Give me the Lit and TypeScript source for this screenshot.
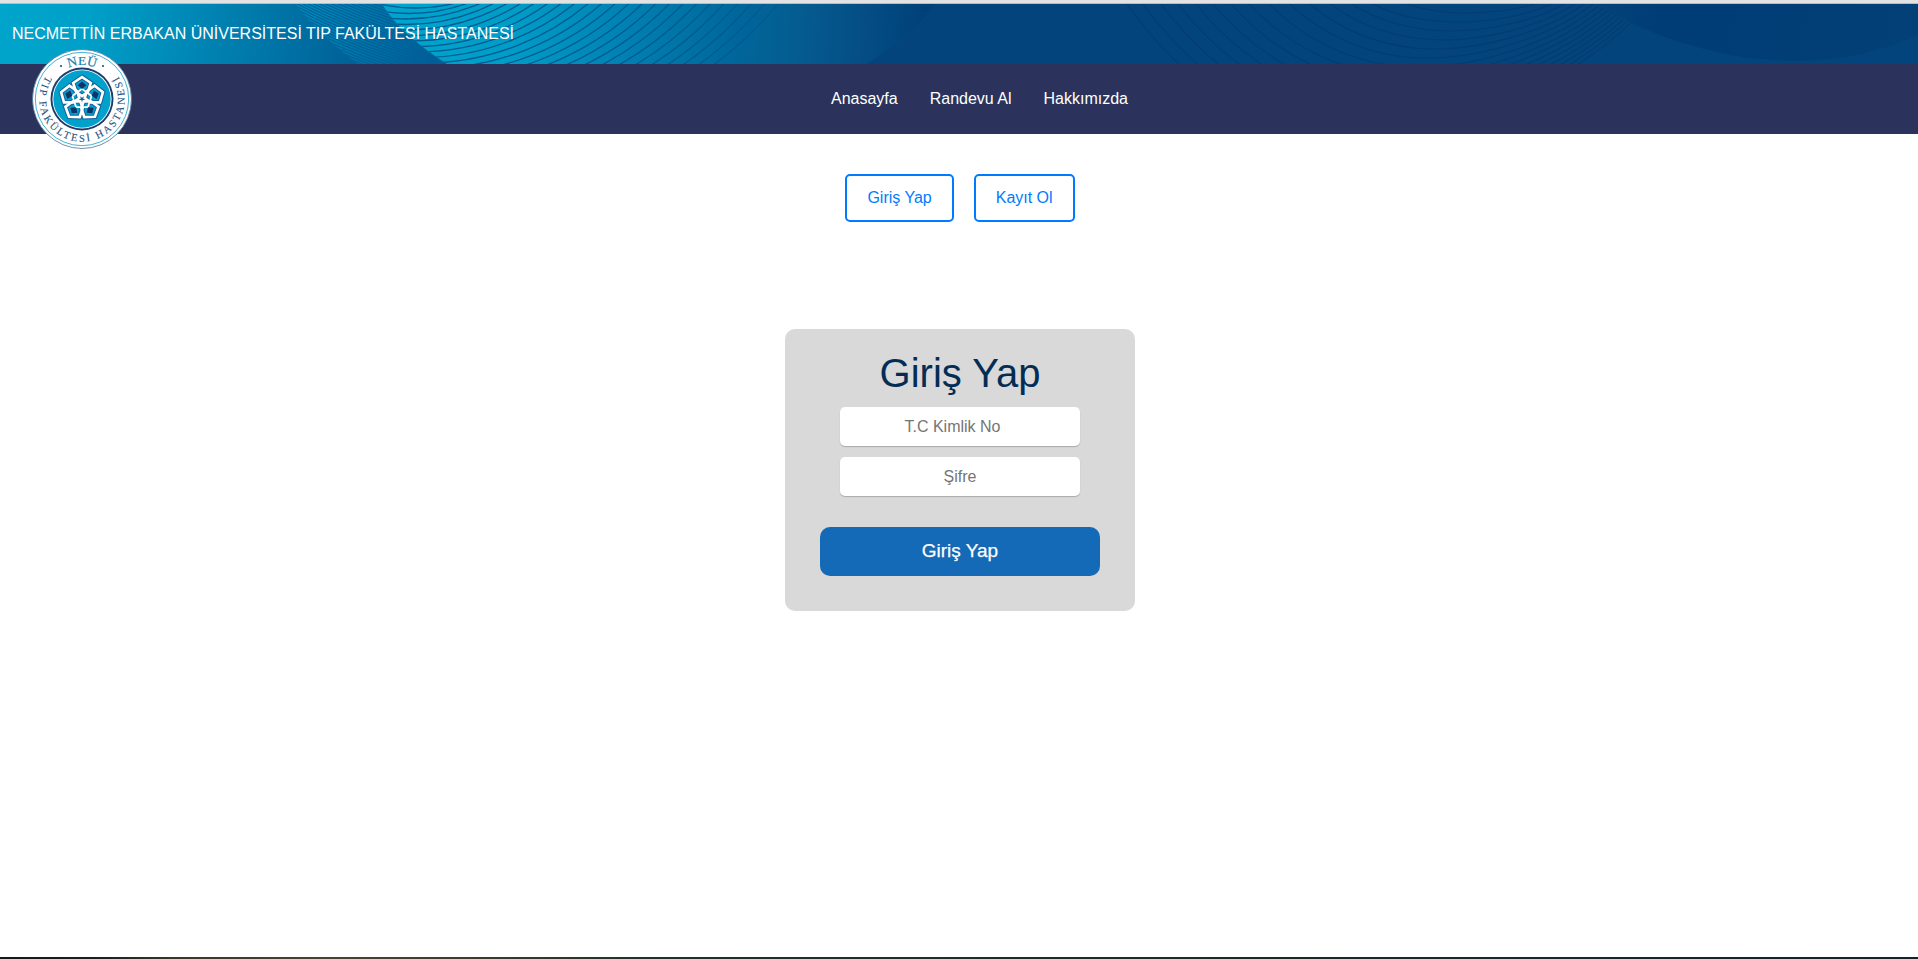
import { LitElement, html, svg, css } from "lit";
import { customElement } from "lit/decorators.js";

const range = (n: number) => Array.from({ length: n }, (_, i) => i);

// Where each nested bowl of the dark section meets the top edge on its left side.
const bowlLeft = [1407, 1373, 1352, 1331, 1310, 1290, 1269, 1249, 1231, 1213, 1196, 1178, 1161, 1143, 1127];

@customElement("banner-art")
class BannerArt extends LitElement {
  static styles = css`
    :host { display: block; width: 100%; height: 60px; }
    svg { display: block; width: 100%; height: 60px; }
  `;

  // Rings sweeping up to the right in the cyan section.
  private ring(k: number) {
    const r = 380 - 9 * k;
    const cy = -240 + 3.5 * k;
    const top = 778 - 13.6 * k;
    const cx = top - Math.sqrt(Math.max(0, r * r - (4 - cy) ** 2));
    return svg`<circle cx=${cx} cy=${cy} r=${r}></circle>`;
  }

  private bowl(left: number, i: number) {
    const j = i + 1;
    const bx = 1475 - 8 * j;
    const by = 4 + 9 * j;
    const right = 1495 + 40 * Math.sqrt(j);
    const l = bx - left, r = right - bx, h = by - 4;
    return svg`<path d="M${left} 4C${left + 0.25 * l} ${4 + 0.6 * h} ${left + 0.6 * l} ${by} ${bx} ${by}S${right - 0.25 * r} ${4 + 0.6 * h} ${right} 4"></path>`;
  }

  render() {
    return html`
      <svg viewBox="0 4 1918 60" preserveAspectRatio="none">
        <defs>
          <linearGradient id="a" gradientUnits="userSpaceOnUse" x1="0" y1="0" x2="350" y2="60">
            <stop offset="0" stop-color="#00a5cc"></stop><stop offset=".25" stop-color="#00a0c8"></stop>
            <stop offset=".6" stop-color="#0083b2"></stop><stop offset=".9" stop-color="#006a9f"></stop>
            <stop offset="1" stop-color="#006198"></stop>
          </linearGradient>
          <linearGradient id="b" gradientUnits="userSpaceOnUse" x1="300" y1="4" x2="430" y2="74">
            <stop offset="0" stop-color="#008cba"></stop><stop offset="1" stop-color="#005c95"></stop>
          </linearGradient>
          <linearGradient id="c" gradientUnits="userSpaceOnUse" x1="400" y1="0" x2="930" y2="40">
            <stop offset="0" stop-color="#00a4cc"></stop><stop offset=".22" stop-color="#009cc5"></stop>
            <stop offset=".42" stop-color="#0082b2"></stop><stop offset=".62" stop-color="#00689c"></stop>
            <stop offset=".75" stop-color="#045c90"></stop><stop offset=".88" stop-color="#044d84"></stop>
            <stop offset="1" stop-color="#003f78"></stop>
          </linearGradient>
          <linearGradient id="d" gradientUnits="userSpaceOnUse" x1="1600" y1="0" x2="1918" y2="60">
            <stop offset="0" stop-color="#04437a"></stop><stop offset=".2" stop-color="#003c76"></stop>
            <stop offset="1" stop-color="#024077"></stop>
          </linearGradient>
          <clipPath id="mid"><path d="M296 4H382Q400 34 447 64H358Q318 34 296 4Z"></path></clipPath>
          <clipPath id="cyan"><path d="M382 4H960V64H447Q400 34 382 4Z"></path></clipPath>
        </defs>
        <rect y="4" width="1918" height="60" fill="#04447c"></rect>
        <rect y="4" width="460" height="60" fill="url(#a)"></rect>
        <g clip-path="url(#mid)">
          <rect x="290" y="4" width="170" height="60" fill="url(#b)"></rect>
          <g fill="none" stroke="#00609a" stroke-width="1.1">
            ${range(50).map((i) => svg`<path d="M280 ${-76 + i * 2.8}Q350 ${-34 + i * 2.8} 455 ${-8 + i * 2.8}"></path>`)}
          </g>
        </g>
        <path d="M382 4H935Q909 40 866 64H447Q400 34 382 4Z" fill="url(#c)"></path>
        <g clip-path="url(#cyan)" fill="none" stroke="#005a94" stroke-width="1.3">
          ${range(25).map((k) => this.ring(k))}
        </g>
        <g fill="none" stroke="#033c72" stroke-width="1.1">
          ${bowlLeft.map((l, i) => this.bowl(l, i))}
        </g>
        <path d="M1595 4C1660 42 1730 61 1797 61C1845 61 1885 50 1918 35V4Z" fill="url(#d)"></path>
      </svg>
    `;
  }
}

@customElement("hospital-seal")
class HospitalSeal extends LitElement {
  static styles = css`
    :host { display: block; width: 100px; height: 100px; }
    svg { display: block; }
    text { font-family: "Liberation Serif", "Times New Roman", serif; }
    .top { font-size: 13.5px; fill: #1683ad; stroke: #1683ad; stroke-width: 0.2px; }
    .rim { font-size: 10.5px; fill: #23517f; stroke: #23517f; stroke-width: 0.1px; }
  `;

  render() {
    const petals = range(5).map((i) => i * 72);
    const petal = "M0 -20L8 -14.6L5.4 -6.5L0 -2.6L-5.4 -6.5L-8 -14.6Z";
    return html`
      <svg width="100" height="100" viewBox="-50 -50 100 100">
        <defs>
          <path id="arc-top" d="M-34 0A34 34 0 0 1 34 0"></path>
          <path id="arc-rim" d="M-35.4 -23.9A42.7 42.7 0 1 0 35.4 -23.9"></path>
        </defs>
        <circle r="49.5" fill="#fff" stroke="#4c7298" stroke-width=".8"></circle>
        <circle r="46.7" fill="none" stroke="#41b4d2" stroke-width="1"></circle>
        <text class="top" text-anchor="middle"><textPath href="#arc-top" startOffset="50%">NEÜ</textPath></text>
        <text class="rim"><textPath href="#arc-rim" startOffset="1" textLength="182">TIP FAKÜLTESİ HASTANESİ</textPath></text>
        <circle cx="-21" cy="-33" r="1.1" fill="#23517f"></circle>
        <circle cx="21" cy="-33" r="1.1" fill="#23517f"></circle>
        <circle r="31.5" fill="#1d3b6c"></circle>
        <circle r="29.6" fill="#fff"></circle>
        <circle r="28.7" fill="#00a2cc"></circle>
        <g fill="none" stroke-linejoin="miter" transform="scale(1.1)">
          ${petals.map((a) => svg`<path transform="rotate(${a})" d=${petal} stroke="#17609a" stroke-width="4.2"></path>`)}
          <path d="M0 -9.2L8.7 -2.8L5.4 7.4H-5.4L-8.7 -2.8Z" stroke="#fff" stroke-width="1.6"></path>
          ${petals.map((a) => svg`<path transform="rotate(${a})" d=${petal} stroke="#fff" stroke-width="2.4"></path>`)}
          ${petals.map((a) => svg`<path transform="rotate(${a})" d="M0 -16L4 -12.6L0 -9.2L-4 -12.6Z" fill="#12336a"></path>`)}
        </g>
      </svg>
    `;
  }
}

@customElement("app-root")
class AppRoot extends LitElement {
  static styles = css`
    * { box-sizing: border-box; }
    :host {
      display: flex;
      flex-direction: column;
      height: 959px;
      overflow: hidden;
      background: #fff;
      font: 16px/18px "Liberation Sans", Arial, sans-serif;
    }
    .edge { height: 4px; background: #e3e3e3; border-bottom: 1px solid #b9bcbd; flex: none; }
    header { position: relative; flex: none; }
    .banner { display: grid; height: 60px; }
    .banner > * { grid-area: 1 / 1; }
    .name { align-self: center; padding: 0 0 1px 12px; color: #fff; z-index: 1; }
    .seal { position: absolute; left: 32px; top: 45px; }
    nav { height: 70px; background: #2b335c; display: flex; align-items: center; justify-content: center; gap: 32px; padding-left: 41px; }
    nav a { color: #fff; text-decoration: none; }
    .tabs { display: flex; justify-content: center; gap: 20px; padding: 40px 0 0 2px; flex: none; }
    .tabs button {
      height: 48px; padding: 0 20px; border: 2px solid #007bff; border-radius: 5px;
      background: #fff; color: #007bff; font: inherit;
    }
    form {
      width: 350px; height: 282px; margin: 107px 0 0 785px; border-radius: 10px; background: #d9d9d9;
      display: flex; flex-direction: column; align-items: center; flex: none;
    }
    h1 { margin: 21px 0 11px; font-weight: 400; font-size: 40px; line-height: 46px; color: #032d55; }
    input {
      width: 240px; height: 39px; border: 0; border-radius: 5px; background: #fff; box-shadow: 0 1px 1px rgba(0, 0, 0, 0.22);
      font: inherit; text-align: center; padding: 1px 0 0; margin: 0 0 11px; outline: none;
    }
    input.id { padding-right: 15px; }
    input::placeholder { color: #757575; opacity: 1; }
    .submit {
      width: 280px; height: 49px; margin-top: 20px; border: 0; border-radius: 10px; background: #146ab6; color: #fff;
      font: 19px/22px "Liberation Sans", Arial, sans-serif; padding: 0 0 2px; -webkit-text-stroke: 0.25px #fff;
    }
    .bottom { margin-top: auto; height: 2px; flex: none; background: linear-gradient(90deg, #171717 0, #1b1f1f 5%, #3a3628 9%, #4b4132 17%, #403b2d 24%, #223029 34%, #1b2b28 60%, #16222a 100%); }
  `;

  render() {
    return html`
      <div class="edge"></div>
      <header>
        <div class="banner">
          <banner-art></banner-art>
          <div class="name">NECMETTİN ERBAKAN ÜNİVERSİTESİ TIP FAKÜLTESİ HASTANESİ</div>
        </div>
        <nav>
          ${["Anasayfa", "Randevu Al", "Hakkımızda"].map((t) => html`<a>${t}</a>`)}
        </nav>
        <hospital-seal class="seal"></hospital-seal>
      </header>
      <div class="tabs"><button>Giriş Yap</button><button>Kayıt Ol</button></div>
      <form>
        <h1>Giriş Yap</h1>
        <input class="id" placeholder="T.C Kimlik No" />
        <input type="password" placeholder="Şifre" />
        <button type="button" class="submit">Giriş Yap</button>
      </form>
      <div class="bottom"></div>
    `;
  }
}
